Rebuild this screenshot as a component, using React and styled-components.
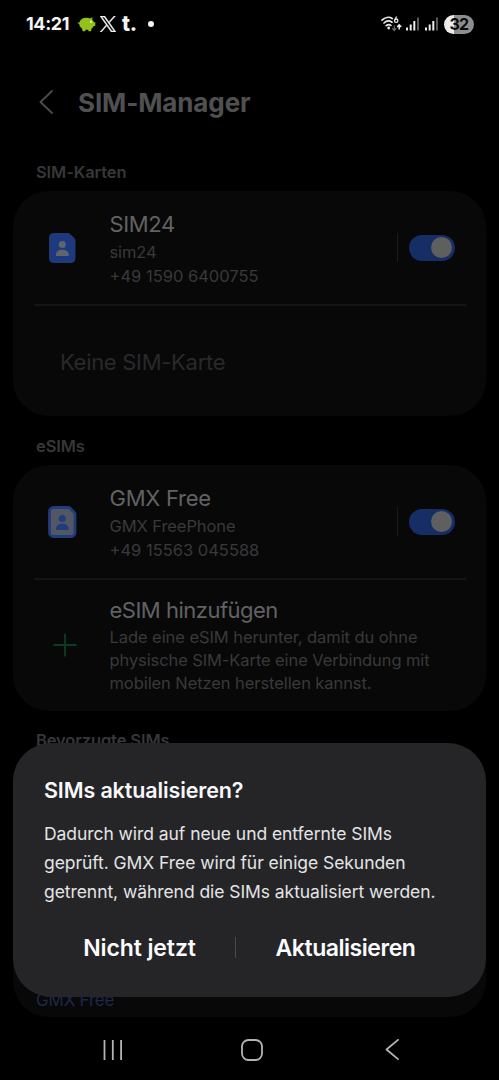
import React from 'react'
import styled, { createGlobalStyle } from 'styled-components'

const GlobalStyle = createGlobalStyle`
  * {
    box-sizing: border-box;
  }
  body {
    margin: 0;
    background: #000;
    font-family: Inter, Roboto, "Liberation Sans", sans-serif;
  }
  svg {
    display: block;
    flex: none;
  }
`

const Screen = styled.div`
  position: relative;
  display: flex;
  flex-direction: column;
  width: 499px;
  height: 1080px;
  overflow: hidden;
  background: #000;
`

const StatusBar = styled.div`
  display: flex;
  align-items: center;
  justify-content: space-between;
  height: 48px;
  padding: 0 25px 0 26px;
`

const StatusGroup = styled.div`
  display: flex;
  align-items: center;
`

const Clock = styled.span`
  width: 51px;
  font-size: 18px;
  font-weight: 700;
  line-height: 20px;
  letter-spacing: -0.4px;
  color: #f4f4f4;
`

const Tumblr = styled.span`
  width: 26px;
  margin-left: 6px;
  font-size: 21px;
  font-weight: 800;
  line-height: 20px;
  letter-spacing: -0.3px;
  color: #f4f4f4;
`

const Dot = styled.span`
  width: 6px;
  height: 6px;
  border-radius: 50%;
  background: #f4f4f4;
`

const Battery = styled.div`
  width: 30px;
  height: 19px;
  margin-left: 6px;
  border-radius: 10px;
  background: linear-gradient(90deg, #ececec 32%, #8e8e8e 32%);
  color: #0a0a0a;
  font-size: 16px;
  font-weight: 700;
  line-height: 19px;
  letter-spacing: -0.8px;
  text-align: center;
`

const Header = styled.div`
  display: flex;
  align-items: center;
  height: 108px;
  padding-left: 39px;
`

const Title = styled.h1`
  margin: 2px 0 0 25px;
  font-size: 26px;
  font-weight: 700;
  line-height: 32px;
  letter-spacing: -0.12px;
  color: #505052;
`

const SectionLabel = styled.div`
  height: ${({ $height }) => $height}px;
  padding: ${({ $top }) => $top}px 0 0 36px;
  font-size: 16.5px;
  font-weight: 600;
  line-height: 22px;
  letter-spacing: -0.12px;
  color: #37373a;
`

const Card = styled.div`
  flex: none;
  display: flex;
  flex-direction: column;
  height: ${({ $height }) => $height}px;
  margin: 0 13px;
  border-radius: 36px;
  background: #080808;
`

const SimRow = styled.div`
  display: flex;
  align-items: center;
  height: 113px;
  padding: 0 31px 0 35px;
`

const AddRow = styled(SimRow)`
  height: 130px;
  padding: 0 31px 0 40px;
`

const Divider = styled.div`
  height: 2px;
  margin: 0 20px 0 21px;
  background: #141414;
`

const Info = styled.div`
  flex: 1;
  margin-left: 32.5px;
  padding-top: ${({ $top }) => $top}px;
`

const Name = styled.div`
  margin-bottom: 2px;
  font-size: 22px;
  font-weight: 400;
  line-height: 28px;
  letter-spacing: ${({ $spacing }) => $spacing || 0}px;
  color: #626264;
`

const Detail = styled.div`
  font-size: 16.5px;
  line-height: ${({ $line }) => $line || 24}px;
  letter-spacing: ${({ $spacing }) => $spacing || 0}px;
  white-space: nowrap;
  color: #39393b;
`

const EmptySlot = styled.div`
  flex: 1;
  display: flex;
  align-items: center;
  padding: 1px 0 0 47px;
  font-size: 22px;
  letter-spacing: -0.3px;
  color: #29292b;
`

const SwitchArea = styled.div`
  display: flex;
  align-items: center;
  gap: 11px;

  &::before {
    content: '';
    width: 1px;
    height: 29px;
    background: #1b1b1d;
  }
`

const Switch = styled.div`
  display: flex;
  align-items: center;
  justify-content: flex-end;
  width: 46px;
  height: 26px;
  padding-right: 3px;
  border-radius: 13px;
  background: #172d66;
`

const Thumb = styled.div`
  width: 21px;
  height: 21px;
  border-radius: 50%;
  background: #5f5f60;
`

const PreferredCard = styled(Card)`
  justify-content: flex-end;
  padding: 0 0 6px 23px;
`

const Preferred = styled.div`
  font-size: 17px;
  line-height: 22px;
  letter-spacing: -0.2px;
  color: #1c2848;
`

const Dialog = styled.div`
  position: absolute;
  left: 13px;
  top: 743px;
  width: 473px;
  height: 254px;
  padding: 33px 31px 0;
  border-radius: 38px;
  background: #252527;
`

const DialogTitle = styled.h2`
  margin: 0;
  font-size: 21.5px;
  font-weight: 600;
  line-height: 28px;
  letter-spacing: -0.12px;
  color: #f8f8fa;
`

const DialogText = styled.p`
  margin: 15px 0 0;
  font-size: 17.5px;
  line-height: 29.2px;
  letter-spacing: -0.06px;
  white-space: nowrap;
  color: #e4e4e6;
`

const Line = styled.span`
  display: block;
`

const Actions = styled.div`
  display: flex;
  align-items: center;
  height: 40px;
  margin-top: 21px;
`

const Action = styled.button`
  width: ${({ $width }) => $width}px;
  padding: 0;
  border: none;
  background: transparent;
  font-family: inherit;
  font-size: 23px;
  font-weight: 600;
  line-height: 30px;
  letter-spacing: ${({ $spacing }) => $spacing || 0}px;
  white-space: nowrap;
  color: #fcfcfe;
`

const ActionDivider = styled.div`
  width: 1px;
  height: 21px;
  background: #4a4a4d;
`

const NavBar = styled.div`
  display: grid;
  grid-template-columns: 138px 144px auto;
  align-items: center;
  height: 63px;
  padding: 2px 0 0 103px;
`

const Pig = () => (
  <svg width="19" height="16" viewBox="0 0 19 16">
    <path d="M.3 6.300c.8.500 1.400.4 2 .2C3.200 3.300 5.800 1.700 9 1.700c1.700 0 2.900.3 3.900.8L15.300 1.200v2.700c.8.700 1.300 1.500 1.600 2.400h1.400v3.700h-1.500c-.5 1.100-1.300 2-2.200 2.600l-.6 2.700h-2.400l-.5-1.600H8.600L8.200 15.300H5.700l-.7-2.800C3.300 11.500 2.300 9.900 2.200 7.800 1.300 7.800.6 7.200.3 6.300z" fill="#94c11c" />
    <circle cx="14" cy="5.800" r="1.100" fill="#eef8c8" />
  </svg>
)

const LogoSvg = styled.svg`
  margin-left: 4px;
`

const XLogo = () => (
  <LogoSvg width="16" height="16" viewBox="0 0 24 24">
    <path
      d="M14.258 10.152 23.176 0h-2.113l-7.747 8.813L7.133 0H0l9.352 13.328L0 23.973h2.113l8.176-9.309 6.531 9.309h7.133zM2.875 1.561h3.246l14.942 20.933h-3.246z"
      fill="#f4f4f4"
      stroke="#f4f4f4"
      strokeWidth=".8"
    />
  </LogoSvg>
)

const Wifi = () => (
  <svg width="21" height="18" viewBox="0 0 21 18">
    <g fill="none" stroke="#e8e8e8" strokeWidth="1.700" strokeLinecap="round">
      <path d="M1 5.200C4 2.100 8.200 1.700 11.200 3.500" />
      <path d="M3 8c2.300-2.200 5.500-2.500 8-.8" />
      <path d="M5.200 10.700c1.500-1.300 3.300-1.400 4.700-.3" />
    </g>
    <circle cx="7.700" cy="13" r="1.400" fill="#e8e8e8" />
    <circle cx="15.200" cy="5.700" r="1.700" fill="none" stroke="#e8e8e8" strokeWidth="1.300" />
    <path d="M13.600 5.200 15.600 1.500" fill="none" stroke="#e8e8e8" strokeWidth="1.300" />
    <path d="M13.300 10.500v5m-2-2.200 2 2.200 2-2.200" fill="none" stroke="#666" strokeWidth="1.300" />
    <path d="M18.200 14.500V9.800m-2 2.200 2-2.200 2 2.200" fill="none" stroke="#f0f0f0" strokeWidth="1.500" />
  </svg>
)

const SignalSvg = styled.svg`
  margin-left: ${({ $left }) => $left}px;
`

const Signal = ({ left }) => (
  <SignalSvg width="13" height="14" viewBox="0 0 13 14" $left={left}>
    <rect x="0" y="10.500" width="2" height="3" fill="#ececec" />
    <rect x="3.700" y="7.500" width="2" height="6" fill="#ececec" />
    <rect x="7.300" y="4" width="2" height="9.500" fill="#ececec" />
    <rect x="11" y="0.500" width="2" height="13" fill="#5a5a5a" />
  </SignalSvg>
)

const Chevron = ({ width, height, color, stroke }) => (
  <svg width={width} height={height} viewBox="0 0 14 24" preserveAspectRatio="none">
    <path d="M13 1 1.500 12 13 23" fill="none" stroke={color} strokeWidth={stroke} strokeLinecap="round" strokeLinejoin="round" vectorEffect="non-scaling-stroke" />
  </svg>
)

const SimIcon = ({ outlined }) => (
  <svg width="29" height="32" viewBox="0 0 29 32">
    <path
      d="M5.500 1.500h14.800c.7 0 1.300.3 1.800.8l4.200 4.300c.5.500.7 1 .7 1.700v18.200a4 4 0 0 1-4 4H5.500a4 4 0 0 1-4-4v-21a4 4 0 0 1 4-4z"
      fill={outlined ? '#535764' : '#1d3a80'}
      stroke={outlined ? '#203c7c' : '#26396a'}
      strokeWidth={outlined ? 2.8 : 1}
    />
    <g fill={outlined ? '#203c7c' : '#60646c'}>
      <circle cx="14.300" cy="12.600" r="3.500" />
      <path d="M8 24v-1.300c0-3 2.700-4.900 6.300-4.900s6.400 1.900 6.400 4.900V24z" />
    </g>
  </svg>
)

const Plus = () => (
  <svg width="24" height="24" viewBox="0 0 24 24">
    <path d="M12 .5v23M.5 12h23" stroke="#0b3e20" strokeWidth="1.800" />
  </svg>
)

const SimSwitch = () => (
  <SwitchArea>
    <Switch>
      <Thumb />
    </Switch>
  </SwitchArea>
)

const App = () => {
  return (
    <Screen>
      <GlobalStyle />
      <StatusBar>
        <StatusGroup>
          <Clock>14:21</Clock>
          <Pig />
          <XLogo />
          <Tumblr>t.</Tumblr>
          <Dot />
        </StatusGroup>
        <StatusGroup>
          <Wifi />
          <Signal left={4} />
          <Signal left={6} />
          <Battery>32</Battery>
        </StatusGroup>
      </StatusBar>

      <Header>
        <Chevron width={14} height={24} color="#4c4c4c" stroke={1.8} />
        <Title>SIM-Manager</Title>
      </Header>

      <SectionLabel $height={35} $top={5}>SIM-Karten</SectionLabel>
      <Card $height={225}>
        <SimRow>
          <SimIcon />
          <Info $top={3}>
            <Name $spacing={-0.35}>SIM24</Name>
            <Detail $spacing={-0.1}>sim24</Detail>
            <Detail>+49 1590 6400755</Detail>
          </Info>
          <SimSwitch />
        </SimRow>
        <Divider />
        <EmptySlot>Keine SIM-Karte</EmptySlot>
      </Card>

      <SectionLabel $height={49} $top={19}>eSIMs</SectionLabel>
      <Card $height={246}>
        <SimRow>
          <SimIcon outlined />
          <Info $top={3}>
            <Name $spacing={-0.25}>GMX Free</Name>
            <Detail $spacing={-0.08}>GMX FreePhone</Detail>
            <Detail>+49 15563 045588</Detail>
          </Info>
          <SimSwitch />
        </SimRow>
        <Divider />
        <AddRow>
          <Plus />
          <Info $top={1}>
            <Name $spacing={-0.5}>eSIM hinzufügen</Name>
            <Detail $line={23.2} $spacing={-0.07}>Lade eine eSIM herunter, damit du ohne</Detail>
            <Detail $line={23.2} $spacing={-0.1}>physische SIM-Karte eine Verbindung mit</Detail>
            <Detail $line={23.2} $spacing={-0.08}>mobilen Netzen herstellen kannst.</Detail>
          </Info>
        </AddRow>
      </Card>

      <SectionLabel $height={48} $top={18}>Bevorzugte SIMs</SectionLabel>
      <PreferredCard $height={258}>
        <Preferred>GMX Free</Preferred>
      </PreferredCard>

      <NavBar>
        <svg width="20" height="22" viewBox="0 0 20 22">
          <path d="M1.500 1v20M9.800 1v20M18.100 1v20" stroke="#b4b4b4" strokeWidth="1.800" />
        </svg>
        <svg width="22" height="22" viewBox="0 0 22 22">
          <rect x="1" y="1" width="20" height="20" rx="6.500" fill="none" stroke="#b4b4b4" strokeWidth="1.800" />
        </svg>
        <Chevron width={14} height={21} color="#b4b4b4" stroke={1.8} />
      </NavBar>

      <Dialog>
        <DialogTitle>SIMs aktualisieren?</DialogTitle>
        <DialogText>
          <Line>Dadurch wird auf neue und entfernte SIMs</Line>
          <Line>geprüft. GMX Free wird für einige Sekunden</Line>
          <Line>getrennt, während die SIMs aktualisiert werden.</Line>
        </DialogText>
        <Actions>
          <Action $width={191} $spacing={-0.1}>Nicht jetzt</Action>
          <ActionDivider />
          <Action $width={219} $spacing={-0.46}>Aktualisieren</Action>
        </Actions>
      </Dialog>
    </Screen>
  )
}

export default App
